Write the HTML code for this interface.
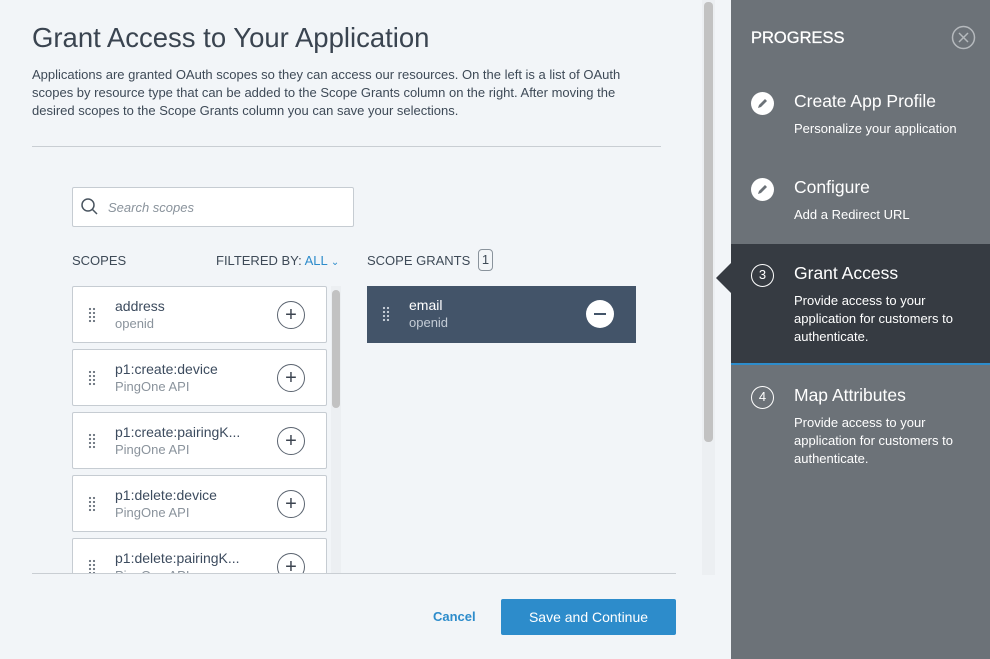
<!DOCTYPE html>
<html><head><style>
*{box-sizing:border-box;margin:0;padding:0}
body{width:990px;height:659px;overflow:hidden;background:#f2f5f8;font-family:"Liberation Sans",sans-serif;position:relative;color:#3e4a57}
.a{position:absolute}
.card{position:absolute;left:72px;width:255px;height:57px;background:#fff;border:1px solid #c6ccd2;border-radius:2px}
.card .t{position:absolute;left:42px;top:11px;font-size:14px;color:#3c4b5e}
.card .s{position:absolute;left:42px;top:29px;font-size:13px;color:#8a939c}
.dots{position:absolute;left:15px;top:20px;width:8px;height:16px;background-image:radial-gradient(circle,#6e7782 1px,transparent 1.3px);background-size:4px 4px}
.plus{position:absolute;left:204px;top:14px;width:28px;height:28px;border:1px solid #5b6470;border-radius:50%;text-align:center;line-height:27px;font-size:20px;color:#3c4450}
.step{position:absolute;left:794px;color:#fff}
.step h3{font-size:17.5px;font-weight:normal}
.step p{font-size:13px;line-height:18px;margin-top:8px}
.ic{position:absolute;left:751px;width:23px;height:23px;border-radius:50%}
</style></head><body>
<div class="a" style="left:32px;top:22px;font-size:27.5px;color:#3a4450">Grant Access to Your Application</div>
<div class="a" style="left:32px;top:66px;width:625px;font-size:13px;line-height:18px;color:#3e4a57">Applications are granted OAuth scopes so they can access our resources. On the left is a list of OAuth scopes by resource type that can be added to the Scope Grants column on the right. After moving the desired scopes to the Scope Grants column you can save your selections.</div>
<div class="a" style="left:32px;top:146px;width:629px;height:1px;background:#c9ced3"></div>
<div class="a" style="left:72px;top:187px;width:282px;height:40px;background:#fff;border:1px solid #c6ccd2;border-radius:2px"></div>
<svg class="a" style="left:80px;top:197px" width="20" height="20"><circle cx="8" cy="8" r="6" fill="none" stroke="#4a5560" stroke-width="1.5"/><line x1="12.5" y1="12.5" x2="17" y2="17" stroke="#4a5560" stroke-width="1.5"/></svg>
<div class="a" style="left:108px;top:200px;font-size:13px;font-style:italic;color:#8a939c">Search scopes</div>
<div class="a" style="left:72px;top:253px;font-size:13px">SCOPES</div>
<div class="a" style="left:216px;top:253px;font-size:13px">FILTERED BY: <span style="color:#2d8ccb">ALL</span> <span style="color:#2d8ccb;font-size:10px">&#8964;</span></div>
<div class="a" style="left:367px;top:253px;font-size:13px">SCOPE GRANTS</div>
<div class="a" style="left:478px;top:249px;width:15px;height:22px;border:1px solid #8a939c;border-radius:4px;font-size:13px;text-align:center;line-height:20px">1</div>
<div class="a" style="left:72px;top:280px;width:270px;height:293px;overflow:hidden">
<div class="card" style="left:0;top:6px"><div class="dots"></div><div class="t">address</div><div class="s">openid</div><div class="plus">+</div></div>
<div class="card" style="left:0;top:69px"><div class="dots"></div><div class="t">p1:create:device</div><div class="s">PingOne API</div><div class="plus">+</div></div>
<div class="card" style="left:0;top:132px"><div class="dots"></div><div class="t">p1:create:pairingK...</div><div class="s">PingOne API</div><div class="plus">+</div></div>
<div class="card" style="left:0;top:195px"><div class="dots"></div><div class="t">p1:delete:device</div><div class="s">PingOne API</div><div class="plus">+</div></div>
<div class="card" style="left:0;top:258px"><div class="dots"></div><div class="t">p1:delete:pairingK...</div><div class="s">PingOne API</div><div class="plus">+</div></div>
<div class="a" style="left:259px;top:6px;width:10px;height:290px;background:#eceff2"></div>
<div class="a" style="left:260px;top:10px;width:8px;height:118px;background:#c2c2c2;border-radius:4px"></div>
</div>
<div class="a" style="left:367px;top:286px;width:269px;height:57px;background:#435469">
<div class="dots" style="background-image:radial-gradient(circle,#c8d0da 1px,transparent 1.3px)"></div>
<div class="a" style="left:42px;top:11px;font-size:14px;color:#fff">email</div>
<div class="a" style="left:42px;top:29px;font-size:13px;color:#c4ccd6">openid</div>
<div class="a" style="left:219px;top:14px;width:28px;height:28px;border-radius:50%;background:#fff"><div class="a" style="left:8px;top:13px;width:12px;height:2px;background:#435469"></div></div>
</div>
<div class="a" style="left:32px;top:573px;width:644px;height:1px;background:#c9ced3"></div>
<div class="a" style="left:433px;top:609px;font-size:13px;font-weight:bold;color:#2d8ccb">Cancel</div>
<div class="a" style="left:501px;top:599px;width:175px;height:36px;background:#2d8ccb;border-radius:2px;color:#fff;font-size:14px;text-align:center;line-height:36px">Save and Continue</div>
<div class="a" style="left:702px;top:0;width:13px;height:575px;background:#eceff2"></div>
<div class="a" style="left:704px;top:2px;width:9px;height:440px;background:#c2c2c2;border-radius:4px"></div>
<div class="a" style="left:731px;top:0;width:259px;height:659px;background:#6c7278"></div>
<div class="a" style="left:731px;top:244px;width:259px;height:119px;background:#363b42"></div>
<div class="a" style="left:731px;top:363px;width:259px;height:2px;background:#2d8ccb"></div>
<div class="a" style="left:716px;top:263px;width:0;height:0;border-top:15px solid transparent;border-bottom:15px solid transparent;border-right:15px solid #363b42"></div>
<div class="a" style="left:751px;top:29px;font-size:16.5px;color:#fff;-webkit-text-stroke:0.3px #fff">PROGRESS</div>
<svg class="a" style="left:951px;top:25px" width="25" height="25"><circle cx="12.5" cy="12.5" r="11" fill="none" stroke="#b5b9bd" stroke-width="1.5"/><path d="M8 8L17 17M17 8L8 17" stroke="#b5b9bd" stroke-width="1.5"/></svg>
<div class="ic" style="top:92px;background:#fff"><svg width="23" height="23"><path d="M7 16l1-3 6-6 2 2-6 6z" fill="#6c7278"/></svg></div>
<div class="step" style="top:91px"><h3>Create App Profile</h3><p>Personalize your application</p></div>
<div class="ic" style="top:178px;background:#fff"><svg width="23" height="23"><path d="M7 16l1-3 6-6 2 2-6 6z" fill="#6c7278"/></svg></div>
<div class="step" style="top:177px"><h3>Configure</h3><p>Add a Redirect URL</p></div>
<div class="ic" style="top:264px;border:1.5px solid #fff;color:#fff;font-size:13px;text-align:center;line-height:20px">3</div>
<div class="step" style="top:263px"><h3>Grant Access</h3><p>Provide access to your<br>application for customers to<br>authenticate.</p></div>
<div class="ic" style="top:386px;border:1.5px solid #fff;color:#fff;font-size:13px;text-align:center;line-height:20px">4</div>
<div class="step" style="top:385px"><h3>Map Attributes</h3><p>Provide access to your<br>application for customers to<br>authenticate.</p></div>
</body></html>
